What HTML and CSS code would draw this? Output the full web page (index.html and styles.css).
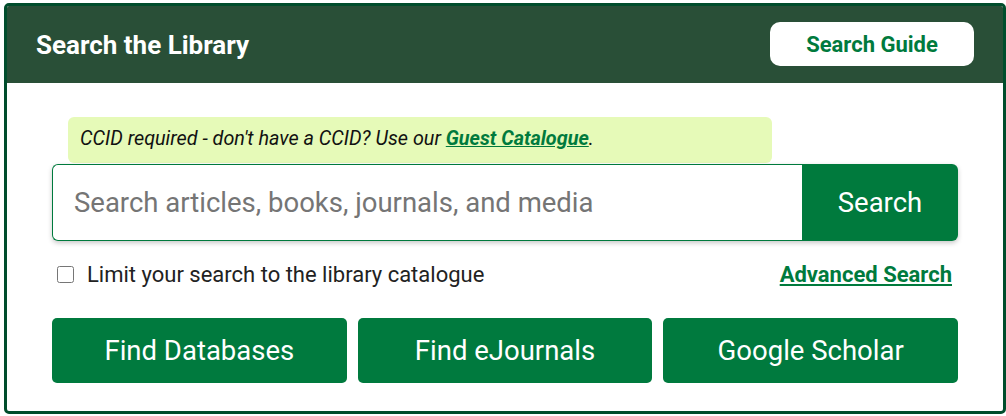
FILE: index.html
```html
<!DOCTYPE html>
<html lang="en">
<head>
<meta charset="utf-8">
<link rel="stylesheet" href="styles.css">
</head>
<body>
<section class="box">
  <header class="head">
    <h2 class="title">Search the Library</h2>
    <a class="guide" href="#">Search Guide</a>
  </header>
  <div class="content">
    <div class="notice"><em>CCID required - don't have a CCID? Use our <a href="#">Guest Catalogue</a>.</em></div>
    <form class="search">
      <input class="field" type="text" placeholder="Search articles, books, journals, and media">
      <button class="go" type="button">Search</button>
    </form>
    <div class="opts">
      <label class="limit"><input type="checkbox" class="cb"> Limit your search to the library catalogue</label>
      <a class="adv" href="#">Advanced Search</a>
    </div>
    <div class="links">
      <a class="btn" href="#">Find Databases</a>
      <a class="btn" href="#">Find eJournals</a>
      <a class="btn" href="#">Google Scholar</a>
    </div>
  </div>
</section>
</body>
</html>
```
FILE: styles.css
```css
* { box-sizing: border-box; }
html, body { margin: 0; padding: 0; background: #fff; }
body { font-family: Roboto, "Liberation Sans", sans-serif; }
.box {
  margin: 3px 1px 0 4px;
  width: 1002px;
  height: 411px;
  border: 3px solid #004d2c;
  border-radius: 5px;
  overflow: hidden;
  display: flex;
  flex-direction: column;
}
.head {
  background: #294f37;
  height: 77px;
  display: flex;
  align-items: center;
  justify-content: space-between;
  padding: 0 29px 0 29px;
}
.title {
  margin: 0;
  color: #fff;
  font-weight: 700;
  font-size: 26px;
}
.guide {
  width: 204px;
  height: 44px;
  background: #fff;
  border-radius: 10px;
  color: #007a3d;
  font-weight: 700;
  font-size: 22px;
  text-decoration: none;
  display: flex;
  align-items: center;
  justify-content: center;
  margin-top: -1px;
}
.content {
  flex: 1;
  padding: 34px 45px 0 45px;
}
.notice {
  margin-left: 16px;
  width: 704px;
  height: 46px;
  background: #e6fab8;
  border-radius: 6px;
  padding: 0 12px;
  display: flex;
  align-items: center;
  font-size: 19.8px;
  color: #111;
  padding-bottom: 3px;
}
.notice a { color: #007a3d; font-weight: 700; }
.search {
  margin: 0;
  display: flex;
  height: 77px;
  border-radius: 6px;
  box-shadow: 0 2px 5px rgba(0,0,0,0.22);
  margin-top: 1px;
}
.field {
  flex: 1;
  border: 1px solid #007a3d;
  border-right: none;
  border-radius: 6px 0 0 6px;
  padding: 0 21px;
  font-family: inherit;
  font-size: 27.5px;
  color: #333;
  outline: none;
}
.field::placeholder { color: #757575; }
.go {
  width: 156px;
  border: none;
  background: #007a3d;
  color: #fff;
  border-radius: 0 6px 6px 0;
  font-family: inherit;
  font-size: 27.5px;
}
.opts {
  display: flex;
  justify-content: space-between;
  align-items: center;
  height: 66px;
  padding: 0 6px 0 5px;
}
.limit {
  display: flex;
  align-items: center;
  font-size: 22px;
  color: #222;
  gap: 13px;
}
.cb {
  width: 17px;
  height: 17px;
  margin: 0;
}
.adv {
  color: #007a3d;
  font-weight: 700;
  font-size: 22px;
}
.links {
  margin-top: 11px;
  display: flex;
  gap: 11px;
}
.btn {
  flex: 1;
  height: 65px;
  background: #007a3e;
  color: #fff;
  border-radius: 5px;
  text-decoration: none;
  font-size: 27.5px;
  display: flex;
  align-items: center;
  justify-content: center;
}
```
